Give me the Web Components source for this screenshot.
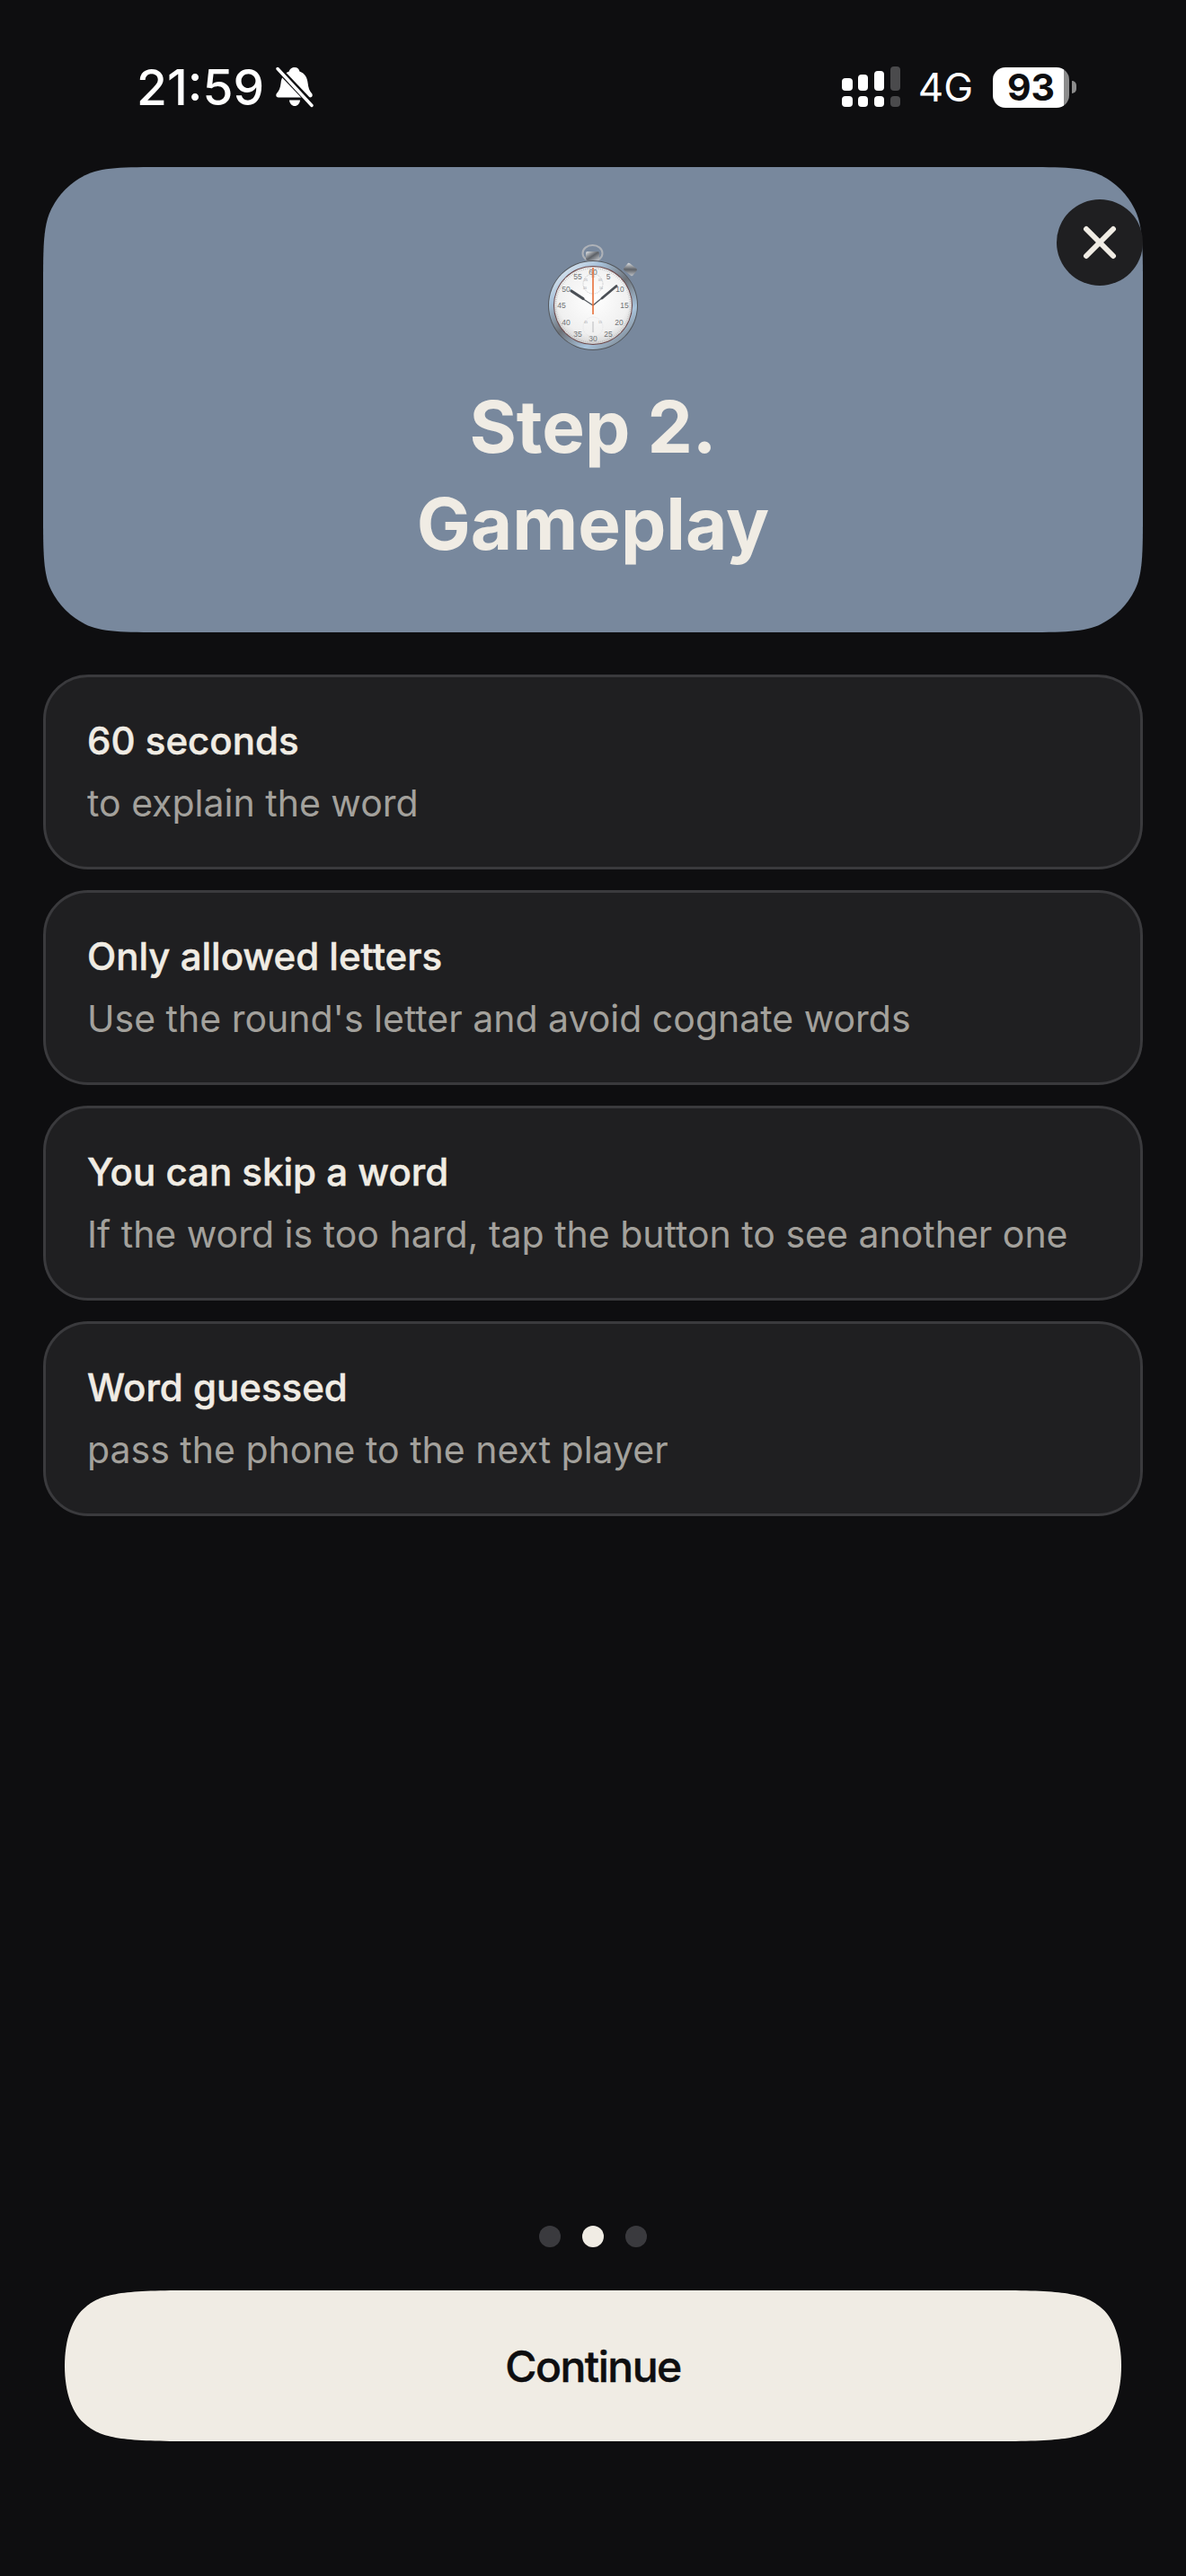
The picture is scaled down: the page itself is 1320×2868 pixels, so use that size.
<!DOCTYPE html>
<html lang="en">
<head>
<meta charset="utf-8">
<title>Step 2. Gameplay</title>
<style>
html, body { margin: 0; padding: 0; background: #0e0e10; }
</style>
</head>
<body>
<rules-screen>
    <phone-status slot="status"></phone-status>
    <step-hero slot="hero" heading="Step 2.|Gameplay"></step-hero>
    <rule-card title-text="60 seconds" sub-text="to explain the word"></rule-card>
    <rule-card title-text="Only allowed letters" sub-text="Use the round's letter and avoid cognate words"></rule-card>
    <rule-card title-text="You can skip a word" sub-text="If the word is too hard, tap the button to see another one"></rule-card>
    <rule-card title-text="Word guessed" sub-text="pass the phone to the next player"></rule-card>
    <page-dots slot="footer" count="3" active="1"></page-dots>
    <continue-button slot="footer">Continue</continue-button>
</rules-screen>

<script>
(function () {
    const rad = (d) => d * Math.PI / 180;

    // continuous corner outline, same maths as the figma "corner smoothing" slider
    function squirclePath(w, h, r, s) {
        const p = (1 + s) * r;
        const arcMeasure = 90 * (1 - s);
        const arc = Math.sin(rad(arcMeasure / 2)) * r * Math.SQRT2;
        const alpha = (90 - arcMeasure) / 2;
        const p3p4 = r * Math.tan(rad(alpha / 2));
        const beta = 45 * s;
        const c = p3p4 * Math.cos(rad(beta));
        const d = c * Math.tan(rad(beta));
        const b = (p - arc - c - d) / 3;
        const a = 2 * b;
        const n = (v) => v.toFixed(2);
        return `M${n(w - p)} 0` +
            `c${n(a)} 0 ${n(a + b)} 0 ${n(a + b + c)} ${n(d)}` +
            `a${r} ${r} 0 0 1 ${n(arc)} ${n(arc)}` +
            `c${n(d)} ${n(c)} ${n(d)} ${n(b + c)} ${n(d)} ${n(a + b + c)}` +
            `L${w} ${n(h - p)}` +
            `c0 ${n(a)} 0 ${n(a + b)} ${n(-d)} ${n(a + b + c)}` +
            `a${r} ${r} 0 0 1 ${n(-arc)} ${n(arc)}` +
            `c${n(-c)} ${n(d)} ${n(-b - c)} ${n(d)} ${n(-a - b - c)} ${n(d)}` +
            `L${n(p)} ${h}` +
            `c${n(-a)} 0 ${n(-a - b)} 0 ${n(-a - b - c)} ${n(-d)}` +
            `a${r} ${r} 0 0 1 ${n(-arc)} ${n(-arc)}` +
            `c${n(-d)} ${n(-c)} ${n(-d)} ${n(-b - c)} ${n(-d)} ${n(-a - b - c)}` +
            `L0 ${n(p)}` +
            `c0 ${n(-a)} 0 ${n(-a - b)} ${n(d)} ${n(-a - b - c)}` +
            `a${r} ${r} 0 0 1 ${n(arc)} ${n(-arc)}` +
            `c${n(c)} ${n(-d)} ${n(b + c)} ${n(-d)} ${n(a + b + c)} ${n(-d)}Z`;
    }

    class RulesScreen extends HTMLElement {
        constructor() {
            super();
            this.attachShadow({ mode: "open" }).innerHTML = `
            <style>
            :host {
                display: flex;
                flex-direction: column;
                box-sizing: border-box;
                width: 1320px;
                height: 2868px;
                background: #0e0e10;
                color: #f0ece4;
                font-family: Inter, "Liberation Sans", sans-serif;
                overflow: hidden;
            }
            .content { display: flex; flex-direction: column; padding: 0 48px; }
            .cards { display: flex; flex-direction: column; gap: 23px; margin-top: 47px; }
            .footer {
                display: flex;
                flex-direction: column;
                align-items: center;
                gap: 48px;
                margin-top: auto;
                padding-bottom: 150px;
            }
            </style>
            <slot name="status"></slot>
            <div class="content">
                <slot name="hero"></slot>
                <div class="cards"><slot></slot></div>
            </div>
            <div class="footer"><slot name="footer"></slot></div>`;
        }
    }

    class PhoneStatus extends HTMLElement {
        constructor() {
            super();
            this.attachShadow({ mode: "open" }).innerHTML = `
            <style>
            :host {
                display: flex;
                align-items: center;
                justify-content: space-between;
                box-sizing: border-box;
                height: 186px;
                padding: 0 122px 0 152px;
                color: #fff;
            }
            .side { display: flex; align-items: center; height: 60px; margin-top: 8px; }
            .time { font-size: 55px; font-weight: 500; line-height: 60px; }
            .bell { margin-left: 13px; }
            .net { font-size: 44px; font-weight: 400; line-height: 60px; margin: 0 22px 0 20px; }
            .battery {
                display: flex;
                align-items: center;
                justify-content: center;
                width: 85px;
                height: 45px;
                border-radius: 14px;
                background: linear-gradient(90deg, #fff 93%, #8c8c8c 93%);
                color: #0e0e10;
                font-size: 41px;
                font-weight: 700;
            }
            .cap { width: 5px; height: 14px; margin-left: 3px; border-radius: 0 6px 6px 0; background: #8c8c8c; }
            </style>
            <div class="side">
                <span class="time">21:59</span>
                <svg class="bell" width="42" height="46" viewBox="0 0 42 46">
                    <path fill="#fff" d="M21 1c3 0 5 2 5.400 4.500 6 2 8.600 7 9.200 13 .5 5 1.900 9 4.400 11.500 1.300 1.400.9 4.500-2 4.500H3C.1 34.500-.3 31.400 1 30c2.500-2.500 4.100-6.500 4.600-11.500.6-6 3.200-11 9.200-13C15.200 3 18 1 21 1z"/>
                    <path fill="#fff" d="M15 37.500h12c-.4 4-3 6.500-6 6.500s-5.600-2.500-6-6.500z"/>
                    <path stroke="#0e0e10" stroke-width="7" d="M0 0l42 44"/>
                    <path stroke="#fff" stroke-width="3.400" stroke-linecap="round" d="M2 2.500l38 41"/>
                </svg>
            </div>
            <div class="side">
                <svg width="66" height="46" viewBox="0 0 66 46">
                    <g fill="#fff">
                        <rect x="1" y="13" width="12" height="14" rx="4"/>
                        <rect x="19" y="9" width="11" height="18" rx="4"/>
                        <rect x="37" y="5" width="11" height="22" rx="4"/>
                        <rect x="1" y="33" width="12" height="12" rx="4"/>
                        <rect x="19" y="33" width="11" height="12" rx="4"/>
                        <rect x="37" y="33" width="11" height="12" rx="4"/>
                    </g>
                    <g fill="#4a4a4c">
                        <rect x="55" y="0" width="11" height="27" rx="4"/>
                        <rect x="55" y="33" width="11" height="12" rx="4"/>
                    </g>
                </svg>
                <span class="net">4G</span>
                <div class="battery">93</div>
                <div class="cap"></div>
            </div>`;
        }
    }

    class StepHero extends HTMLElement {
        constructor() {
            super();
            const lines = (this.getAttribute("heading") || "").split("|").map((l) => `<div>${l}</div>`).join("");
            this.attachShadow({ mode: "open" }).innerHTML = `
            <style>
            :host {
                display: block;
                position: relative;
                height: 518px;
            }
            .panel {
                display: flex;
                flex-direction: column;
                align-items: center;
                box-sizing: border-box;
                height: 518px;
                padding-top: 86px;
                background: #78889d;
                clip-path: path("${squirclePath(1224, 518, 85, 0.6)}");
            }
            h1 {
                margin: 29px 0 0;
                font-size: 80px;
                font-weight: 700;
                line-height: 108px;
                text-align: center;
                color: #f0ece4;
            }
            .close {
                position: absolute;
                top: 36px;
                right: 0;
                display: flex;
                align-items: center;
                justify-content: center;
                width: 96px;
                height: 96px;
                border-radius: 50%;
                background: #1f1f21;
            }
            </style>
            <div class="panel">
                <stop-watch></stop-watch>
                <h1>${lines}</h1>
            </div>
            <div class="close">
                <svg width="40" height="40" viewBox="0 0 40 40">
                    <path d="M5 5l30 30M35 5L5 35" stroke="#f0ece4" stroke-width="6" stroke-linecap="round"/>
                </svg>
            </div>`;
        }
    }

    // the stopwatch emoji, drawn by hand
    class StopWatch extends HTMLElement {
        constructor() {
            super();
            const marks = [["60",60,31],["5",77,36],["10",90,50],["15",95,68],["20",89,87],["25",77,100],["30",60,105],["35",43,100],["40",30,87],["45",25,68],["50",30,50],["55",43,36]];
            const numerals = marks.map((m) => `<text x="${m[1]}" y="${m[2] + 3}">${m[0]}</text>`).join("");
            let ticks = "";
            for (let i = 0; i < 120; i++) {
                const a = rad(i * 3);
                const x1 = 60 + Math.sin(a) * 43, y1 = 68 - Math.cos(a) * 43;
                const x2 = 60 + Math.sin(a) * 40.500, y2 = 68 - Math.cos(a) * 40.500;
                ticks += `<path d="M${x1.toFixed(1)} ${y1.toFixed(1)}L${x2.toFixed(1)} ${y2.toFixed(1)}"/>`;
            }
            this.attachShadow({ mode: "open" }).innerHTML = `
            <style>
            :host { display: block; width: 120px; height: 120px; }
            svg { display: block; overflow: visible; }
            text { font: 400 8.500px "Liberation Sans", sans-serif; fill: #6f7275; text-anchor: middle; }
            .sm { font-size: 3.500px; fill: #9a9c9f; }
            </style>
            <svg width="120" height="120" viewBox="0 0 120 120">
                <defs>
                    <linearGradient id="rim" x1="0.1" y1="0" x2="0.9" y2="1">
                        <stop offset="0" stop-color="#eef3f8"/>
                        <stop offset="0.25" stop-color="#a8c2da"/>
                        <stop offset="0.5" stop-color="#6d7279"/>
                        <stop offset="0.75" stop-color="#a9c4dc"/>
                        <stop offset="1" stop-color="#70757c"/>
                    </linearGradient>
                    <radialGradient id="face" cx="0.5" cy="0.42" r="0.65">
                        <stop offset="0" stop-color="#ffffff"/>
                        <stop offset="0.7" stop-color="#f0f0f0"/>
                        <stop offset="1" stop-color="#c6c6c6"/>
                    </radialGradient>
                    <linearGradient id="metal" x1="0" y1="0" x2="1" y2="1">
                        <stop offset="0" stop-color="#e6e9ec"/>
                        <stop offset="0.5" stop-color="#5d6167"/>
                        <stop offset="1" stop-color="#c6cacf"/>
                    </linearGradient>
                </defs>
                <ellipse cx="59.500" cy="10" rx="11" ry="9" fill="none" stroke="#aeb2b8" stroke-width="2"/>
                <rect x="52" y="8" width="15" height="10" rx="2" fill="url(#metal)"/>
                <rect x="95" y="23" width="13" height="10" rx="2" transform="rotate(38 101.500 28)" fill="url(#metal)"/>
                <circle cx="60" cy="68" r="50" fill="#54575c"/>
                <circle cx="60" cy="68" r="49" fill="url(#rim)"/>
                <circle cx="60" cy="68" r="44" fill="#6a4446"/>
                <circle cx="60" cy="68" r="43" fill="url(#face)"/>
                <g stroke="#a8aaad" stroke-width="0.500">${ticks}</g>
                ${numerals}
                <circle cx="60" cy="44" r="11" fill="none" stroke="#b5b7ba" stroke-width="0.800" stroke-dasharray="1 1"/>
                <text class="sm" x="60" y="37">30</text><text class="sm" x="52" y="41">25</text><text class="sm" x="68" y="41">05</text>
                <text class="sm" x="51" y="50">20</text><text class="sm" x="69" y="50">10</text>
                <circle cx="60" cy="92" r="11" fill="none" stroke="#dcdde0" stroke-width="0.700" stroke-dasharray="1 1"/>
                <text class="sm" x="52" y="88">45</text><text class="sm" x="68" y="88">15</text>
                <path d="M60 86v12" stroke="#a9abae" stroke-width="0.800"/>
                <path d="M60 68L47 59.500" stroke="#555a60" stroke-width="1.400"/>
                <path d="M49 60.500L36 52" stroke="#4a4f55" stroke-width="3.200" stroke-linecap="round"/>
                <path d="M60 68L72 58" stroke="#555a60" stroke-width="1.400"/>
                <path d="M70 60L86 46.500" stroke="#4a4f55" stroke-width="2.800" stroke-linecap="round"/>
                <path d="M60 26V78" stroke="#e8703a" stroke-width="1.600"/>
            </svg>`;
        }
    }

    class RuleCard extends HTMLElement {
        constructor() {
            super();
            this.attachShadow({ mode: "open" }).innerHTML = `
            <style>
            :host {
                display: flex;
                flex-direction: column;
                gap: 13px;
                box-sizing: border-box;
                height: 217px;
                padding: 43px 46px;
                background: #1f1f21;
                border: 3px solid #3a3a3d;
                border-radius: 50px;
            }
            div { line-height: 56px; white-space: nowrap; }
            .t { font-size: 42px; font-weight: 500; -webkit-text-stroke: 0.500px #f0ece4; color: #f0ece4; }
            .s { font-size: 41px; font-weight: 400; color: #a3a19c; }
            </style>
            <div class="t">${this.getAttribute("title-text")}</div>
            <div class="s">${this.getAttribute("sub-text")}</div>`;
        }
    }

    class PageDots extends HTMLElement {
        constructor() {
            super();
            const count = Number(this.getAttribute("count"));
            const active = Number(this.getAttribute("active"));
            let dots = "";
            for (let i = 0; i < count; i++) dots += `<i class="${i === active ? "on" : ""}"></i>`;
            this.attachShadow({ mode: "open" }).innerHTML = `
            <style>
            :host { display: flex; gap: 24px; }
            i { display: block; width: 24px; height: 24px; border-radius: 50%; background: #3a3a3e; }
            i.on { background: #f0ece4; }
            </style>${dots}`;
        }
    }

    class ContinueButton extends HTMLElement {
        constructor() {
            super();
            const w = 1176, h = 168;
            const shape = `M130 0H${w - 130}C${w - 60} 0 ${w - 40} 5 ${w - 24} 18C${w - 8} 30 ${w} 55 ${w} 84C${w} 113 ${w - 8} 138 ${w - 24} 150C${w - 40} 163 ${w - 60} ${h} ${w - 130} ${h}H130C60 ${h} 40 163 24 150C8 138 0 113 0 84C0 55 8 30 24 18C40 5 60 0 130 0Z`;
            this.attachShadow({ mode: "open" }).innerHTML = `
            <style>
            :host {
                display: flex;
                align-items: center;
                justify-content: center;
                width: ${w}px;
                height: ${h}px;
                background: #f0ece4;
                color: #0e0e10;
                font-size: 48px;
                font-weight: 500;
                letter-spacing: -1.500px;
                -webkit-text-stroke: 0.500px #0e0e10;
                clip-path: path("${shape}");
            }
            </style><slot></slot>`;
        }
    }

    customElements.define("rules-screen", RulesScreen);
    customElements.define("phone-status", PhoneStatus);
    customElements.define("step-hero", StepHero);
    customElements.define("stop-watch", StopWatch);
    customElements.define("rule-card", RuleCard);
    customElements.define("page-dots", PageDots);
    customElements.define("continue-button", ContinueButton);
})();
</script>
</body>
</html>
